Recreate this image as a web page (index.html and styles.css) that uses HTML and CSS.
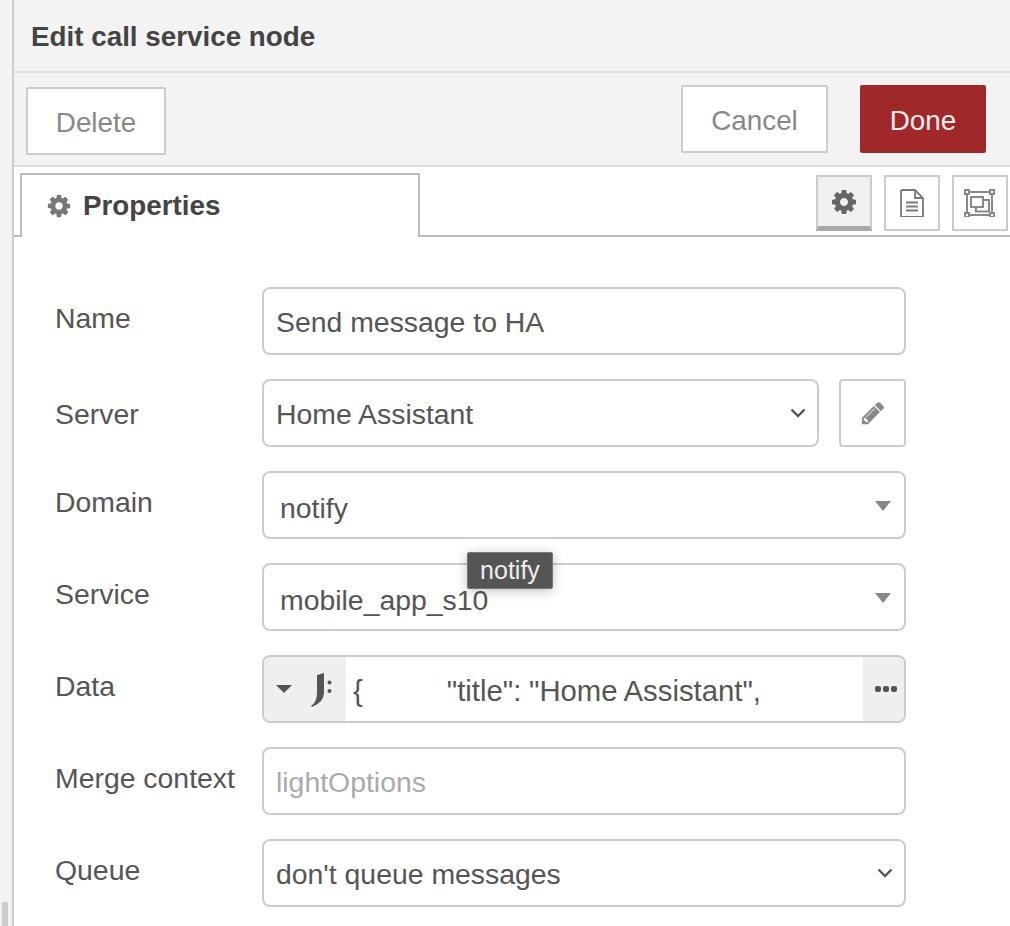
FILE: index.html
```html
<!DOCTYPE html>
<html lang="en">
<head>
<meta charset="utf-8">
<title>Edit call service node</title>
<link rel="stylesheet" href="styles.css">
</head>
<body>
<div class="page">
  <aside class="gutter"><div class="thumb"></div></aside>
  <main class="panel">
    <header class="title-bar">Edit call service node</header>
    <div class="toolbar">
      <button class="btn btn-delete">Delete</button>
      <div class="toolbar-right">
        <button class="btn btn-cancel">Cancel</button>
        <button class="btn btn-done">Done</button>
      </div>
    </div>
    <div class="tabs">
      <div class="tab">
        <svg class="tab-gear" viewBox="0 0 1792 1792"><path d="M1152 896q0-106-75-181t-181-75-181 75-75 181 75 181 181 75 181-75 75-181zm512-109v222q0 12-8 23t-20 13l-185 28q-19 54-39 91 35 50 107 138 10 12 10 25t-9 23q-27 37-99 108t-94 71q-12 0-26-9l-138-108q-44 23-91 38-16 136-29 186-7 28-36 28h-222q-14 0-24.500-8.500t-11.500-21.500l-28-184q-49-16-90-37l-141 107q-10 9-25 9-14 0-25-11-126-114-165-168-7-10-7-23 0-12 8-23 15-21 51-66.500t54-70.500q-27-50-41-99l-183-27q-13-2-21-12.500t-8-23.500v-222q0-12 8-23t19-13l186-28q14-46 39-92-40-57-107-138-10-12-10-24 0-10 9-23 26-36 98.500-107.500t94.500-71.500q13 0 26 10l138 107q44-23 91-38 16-136 29-186 7-28 36-28h222q14 0 24.500 8.500t11.500 21.500l28 184q49 16 90 37l142-107q9-9 24-9 13 0 25 10 129 119 165 170 7 8 7 22 0 12-8 23-15 21-51 66.500t-54 70.500q26 50 41 98l183 28q13 2 21 12.500t8 23.500z"/></svg>
        <span>Properties</span>
      </div>
      <div class="tab-tools">
        <div class="tool tool-active">
          <svg class="tool-gear" viewBox="0 0 1792 1792"><path d="M1152 896q0-106-75-181t-181-75-181 75-75 181 75 181 181 75 181-75 75-181zm512-109v222q0 12-8 23t-20 13l-185 28q-19 54-39 91 35 50 107 138 10 12 10 25t-9 23q-27 37-99 108t-94 71q-12 0-26-9l-138-108q-44 23-91 38-16 136-29 186-7 28-36 28h-222q-14 0-24.500-8.500t-11.500-21.500l-28-184q-49-16-90-37l-141 107q-10 9-25 9-14 0-25-11-126-114-165-168-7-10-7-23 0-12 8-23 15-21 51-66.500t54-70.500q-27-50-41-99l-183-27q-13-2-21-12.500t-8-23.500v-222q0-12 8-23t19-13l186-28q14-46 39-92-40-57-107-138-10-12-10-24 0-10 9-23 26-36 98.500-107.500t94.500-71.500q13 0 26 10l138 107q44-23 91-38 16-136 29-186 7-28 36-28h222q14 0 24.500 8.500t11.500 21.500l28 184q49 16 90 37l142-107q9-9 24-9 13 0 25 10 129 119 165 170 7 8 7 22 0 12-8 23-15 21-51 66.500t-54 70.500q26 50 41 98l183 28q13 2 21 12.500t8 23.500z"/></svg>
        </div>
        <div class="tool">
          <svg class="tool-file" viewBox="0 0 24 28"><path d="M1 2.200A1.200 1.200 0 0 1 2.200 1H15l8 8v17.800a1.200 1.200 0 0 1-1.200 1.200H2.200A1.200 1.200 0 0 1 1 26.800zM15 1v8h8M6 13.500h12M6 17.500h12M6 21.500h12"/></svg>
        </div>
        <div class="tool">
          <svg class="tool-frame" viewBox="0 0 32 28"><path d="M5 3h21M5 26h21M3 5v19M28 5v19M12 11h13v11.500H12z"/><path class="corners" d="M7 8h12v10H7zM1 1h4v4H1zM26 1h4v4h-4zM1 24h4v4H1zM26 24h4v4h-4z"/></svg>
        </div>
      </div>
    </div>
    <form class="form">
      <div class="row">
        <label class="label">Name</label>
        <div class="field field-text"><span>Send message to HA</span></div>
      </div>
      <div class="row">
        <label class="label label-server">Server</label>
        <div class="field field-select server-select"><span>Home Assistant</span><svg class="chevron" viewBox="0 0 16 10"><path d="M1.500 1.500L8 8l6.500-6.500"/></svg></div>
        <div class="edit-btn">
          <svg viewBox="0 0 1792 1792"><path d="M491 1536l91-91-235-235-91 91v107h128v128h107zm523-928q0-22-22-22-10 0-17 7l-542 542q-7 7-7 17 0 22 22 22 10 0 17-7l542-542q7-7 7-17zm-54-192l416 416-832 832h-416v-416zm683 96q0 53-37 90l-166 166-416-416 166-165q36-38 90-38 53 0 91 38l235 234q37 39 37 91z"/></svg>
        </div>
      </div>
      <div class="row">
        <label class="label">Domain</label>
        <div class="field field-combo"><span class="combo-text">notify</span><span class="caret"></span></div>
      </div>
      <div class="row">
        <label class="label">Service</label>
        <div class="field field-combo"><span class="combo-text">mobile_app_s10</span><span class="caret"></span></div>
      </div>
      <div class="row">
        <label class="label">Data</label>
        <div class="field field-typed">
          <div class="type-select">
            <span class="type-caret"></span>
            <svg class="json-icon" viewBox="0 0 22 34"><path d="M6 2L13 0v20q0 9-12 14l-1-1q6-4 6-13z"/><circle cx="18.500" cy="9.500" r="2"/><circle cx="18.500" cy="18" r="2"/></svg>
          </div>
          <div class="typed-value">{           "title": "Home Assistant",</div>
          <div class="expand"><i></i><i></i><i></i></div>
        </div>
      </div>
      <div class="row">
        <label class="label">Merge context</label>
        <div class="field field-text placeholder"><span>lightOptions</span></div>
      </div>
      <div class="row">
        <label class="label">Queue</label>
        <div class="field field-select"><span>don't queue messages</span><svg class="chevron" viewBox="0 0 16 10"><path d="M1.500 1.500L8 8l6.500-6.500"/></svg></div>
      </div>
      <div class="tooltip">notify</div>
    </form>
  </main>
</div>
</body>
</html>
```
FILE: styles.css
```css
* { box-sizing: border-box; }
html, body { margin: 0; height: 100%; }
body {
  overflow: hidden;
  background: #fff;
  color: #555;
  font-family: "Liberation Sans", Arial, sans-serif;
  font-size: 28.4px;
}
.page { display: flex; height: 926px; }
.gutter {
  flex: 0 0 14px;
  display: flex;
  flex-direction: column;
  justify-content: flex-end;
  background: #f3f3f3;
  border-right: 2px solid #ccc;
}
.thumb { width: 6px; height: 24px; margin-left: 2px; background: #ccc; }
.panel { flex: 1; min-width: 0; }

.title-bar {
  height: 73px;
  padding: 21px 0 0 17px;
  background: #f3f3f3;
  border-bottom: 2px solid #ddd;
  color: #444;
  font-size: 27.8px;
  font-weight: 700;
  line-height: 32px;
}
.toolbar {
  display: flex;
  justify-content: space-between;
  height: 94px;
  padding: 12px 24px 0 12px;
  background: #f3f3f3;
  border-bottom: 2px solid #ddd;
}
.toolbar-right { display: flex; gap: 32px; }
.btn {
  height: 68px;
  padding: 4px 0 0;
  border: 2px solid #ccc;
  border-radius: 2px;
  background: #fff;
  color: #888;
  font-family: inherit;
  font-size: 27.8px;
}
.btn-delete { width: 140px; margin-top: 2px; }
.btn-cancel { width: 147px; }
.btn-done { width: 126px; background: #a0282a; border-color: #a0282a; color: #eee; }

.tabs {
  display: flex;
  justify-content: space-between;
  height: 70px;
  padding: 6px 2px 0 6px;
  border-bottom: 2px solid #bbb;
}
.tab {
  display: flex;
  align-items: center;
  gap: 11px;
  width: 400px;
  height: 64px;
  padding: 0 0 0 24px;
  background: #fff;
  border: 2px solid #bbb;
  border-bottom: 0;
  color: #444;
  font-size: 27.8px;
  font-weight: 700;
}
.tab-gear { width: 26px; height: 26px; fill: #777; }
.tab-tools { display: flex; gap: 12px; padding-top: 2px; }
.tool {
  display: flex;
  align-items: center;
  justify-content: center;
  width: 56px;
  height: 56px;
  border: 2px solid #ccc;
  background: #fff;
}
.tool-active { background: #f0f0f0; border-bottom: 5px solid #aaa; }
.tool-gear { width: 28px; height: 28px; fill: #666; }
.tool-file { width: 24px; height: 28px; fill: none; stroke: #777; stroke-width: 1.800; }
.tool-frame { width: 32px; height: 28px; fill: none; stroke: #888; stroke-width: 2; }
.tool-frame .corners { fill: #fff; }

.form {
  position: relative;
  display: flex;
  flex-direction: column;
  gap: 24px;
  padding: 50px 0 0 41px;
}
.row { display: flex; align-items: flex-start; height: 68px; }
.label { flex: 0 0 207px; padding-top: 14px; line-height: 34px; }
.label-server { padding-top: 18px; }
.field {
  position: relative;
  display: flex;
  align-items: center;
  width: 644px;
  height: 68px;
  border: 2px solid #ccc;
  border-radius: 8px;
  background: #fff;
  white-space: pre;
}
.field-text { padding: 3px 0 0 12px; }
.placeholder { color: #aaa; }
.field-select { justify-content: space-between; padding: 0 11px 0 12px; }
.field-select span { padding-top: 3px; }
.server-select { width: 557px; margin-right: 20px; }
.chevron { width: 16px; height: 10px; fill: none; stroke: #555; stroke-width: 2.400; }
.edit-btn {
  display: flex;
  align-items: center;
  justify-content: center;
  width: 67px;
  height: 68px;
  border: 2px solid #ccc;
  border-radius: 4px;
}
.edit-btn svg { width: 26px; height: 26px; fill: #888; }
.field-combo { justify-content: space-between; padding: 0 13px 0 16px; }
.combo-text { padding-top: 7px; }
.caret {
  width: 0;
  height: 0;
  margin-top: 2px;
  border-left: 8px solid transparent;
  border-right: 8px solid transparent;
  border-top: 10px solid #888;
}
.field-typed { overflow: hidden; }
.type-select {
  display: flex;
  align-items: center;
  flex: 0 0 82px;
  height: 100%;
  padding-left: 12px;
  background: #efefef;
}
.type-caret {
  width: 0;
  height: 0;
  margin-right: 19px;
  border-left: 8px solid transparent;
  border-right: 8px solid transparent;
  border-top: 8px solid #555;
}
.json-icon { width: 22px; height: 34px; margin-top: 2px; fill: #555; }
.typed-value { flex: 1; padding: 3px 0 0 7px; color: #555; font-size: 29.3px; word-spacing: -0.5px; }
.expand {
  display: flex;
  align-items: center;
  justify-content: center;
  gap: 2px;
  flex: 0 0 41px;
  height: 100%;
  padding-left: 4px;
  background: #efefef;
}
.expand i { width: 6px; height: 6px; border-radius: 2px; background: #555; }
.tooltip {
  position: absolute;
  left: 453px;
  top: 0;
  margin-top: 315px;
  width: 86px;
  height: 37px;
  border: 1px solid #777;
  border-radius: 2px;
  background: #555;
  box-shadow: 0 2px 12px rgba(0, 0, 0, 0.25);
  color: #eee;
  font-size: 25px;
  line-height: 35px;
  text-align: center;
}
```
